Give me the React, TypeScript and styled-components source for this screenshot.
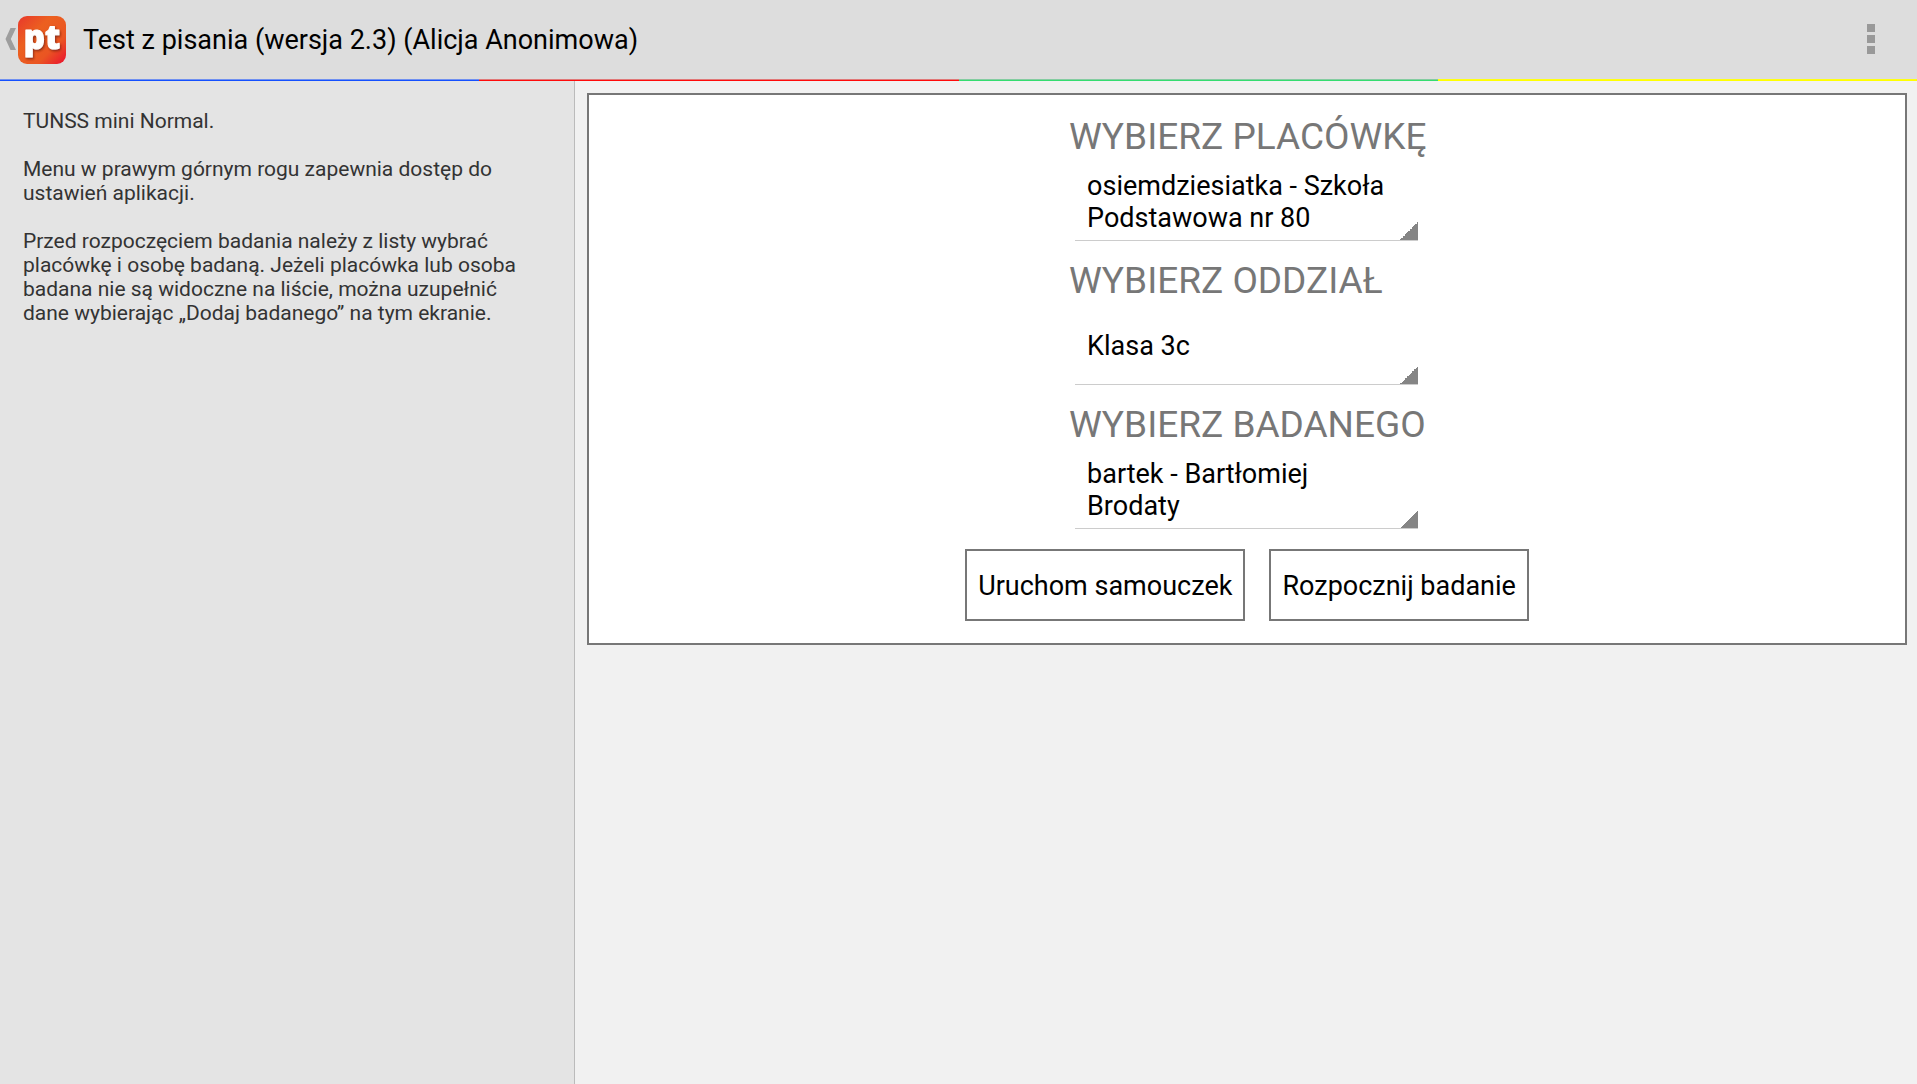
import React, { useState } from "react";
import styled, { createGlobalStyle } from "styled-components";

const GlobalStyle = createGlobalStyle`
  * { box-sizing: border-box; }
  body {
    margin: 0;
    background: #f1f1f1;
    color: #000;
    font-family: Roboto, "Noto Sans", sans-serif;
  }
`;

const Page = styled.div`
  min-height: 100vh;
  display: flex;
  flex-direction: column;
`;

const ActionBar = styled.header`
  display: flex;
  align-items: center;
  justify-content: space-between;
  height: 79px;
  padding: 0 34px 0 4px;
  background: #ddd;
`;

const HomeGroup = styled.div`
  display: flex;
  align-items: center;
  gap: 17px;
`;

const HomeButton = styled.button`
  display: flex;
  padding: 0;
  border: 0;
  background: none;
  cursor: pointer;
`;

const Title = styled.h1`
  margin: 0;
  font-size: 27px;
  line-height: 32px;
  font-weight: 400;
`;

const MenuButton = styled.button`
  display: flex;
  flex-direction: column;
  gap: 3px;
  padding: 8px 8px 9px;
  border: 0;
  background: none;
  cursor: pointer;
`;

const MenuDot = styled.span`
  width: 8px;
  height: 8px;
  background: #999;
`;

const Stripes = styled.div`
  display: flex;
`;

const Stripe = styled.span<{ $edge: string; $color: string }>`
  flex: 1;
  height: 2px;
  background: linear-gradient(${(p) => p.$edge} 50%, ${(p) => p.$color} 50%);
`;

const Body = styled.div`
  flex: 1;
  display: flex;
`;

const Sidebar = styled.aside`
  width: 30%;
  padding: 28px 28px 28px 23px;
  border-right: 1px solid #bbb;
  background: #e4e4e4;
  color: #333;
  font-size: 21px;
  line-height: 24px;
`;

const Paragraph = styled.p`
  margin: 0 0 24px;
`;

const Main = styled.main`
  flex: 1;
  padding: 12px 10px 12px 12px;
`;

const Panel = styled.form`
  display: flex;
  flex-direction: column;
  align-items: center;
  gap: 20px;
  padding: 18px 12px 22px;
  border: 2px solid #777;
  background: #fff;
`;

const Fields = styled.div`
  display: flex;
  flex-direction: column;
  gap: 16px;
  width: 356px;
`;

const Field = styled.div`
  display: flex;
  flex-direction: column;
`;

const FieldLabel = styled.label`
  color: #777;
  font-size: 37px;
  line-height: 48px;
  white-space: nowrap;
`;

const Spinner = styled.select`
  appearance: none;
  height: 80px;
  margin: 0 7px 0 6px;
  padding: 2px 24px 0 12px;
  border: 0;
  border-radius: 0;
  background:
    linear-gradient(135deg, transparent 50%, #858585 50%) right 0 bottom 1px / 18px 18px no-repeat,
    linear-gradient(#ccc, #ccc) left bottom / 100% 1px no-repeat;
  color: #000;
  font-family: inherit;
  font-size: 27px;
  line-height: 32px;
  white-space: normal;
`;

const Actions = styled.div`
  display: flex;
  gap: 24px;
`;

const ActionButton = styled.button`
  height: 72px;
  padding: 2px 11px 0;
  border: 2px solid #777;
  background: #fff;
  color: #000;
  font-family: inherit;
  font-size: 27px;
  line-height: 32px;
  cursor: pointer;
`;

const STRIPES = [
  { edge: "#7090f0", color: "#1450ff" },
  { edge: "#e07878", color: "#ff0a0a" },
  { edge: "#84cca0", color: "#35dc70" },
  { edge: "#ffff14", color: "#ffff00" },
];

const FIELDS = [
  { id: "placowka", label: "WYBIERZ PLACÓWKĘ", value: "osiemdziesiatka - Szkoła Podstawowa nr 80" },
  { id: "oddzial", label: "WYBIERZ ODDZIAŁ", value: "Klasa 3c" },
  { id: "badany", label: "WYBIERZ BADANEGO", value: "bartek - Bartłomiej Brodaty" },
];

function HomeIcon() {
  return (
    <svg width="62" height="64" viewBox="0 -8 62 64" aria-hidden="true">
      <defs>
        <linearGradient id="tile" x1="0" y1="0" x2="1" y2="1">
          <stop offset="0" stopColor="#e8382c" />
          <stop offset="0.35" stopColor="#ec6020" />
          <stop offset="0.7" stopColor="#ea5522" />
          <stop offset="1" stopColor="#ea1030" />
        </linearGradient>
        <filter id="shade" x="-20%" y="-20%" width="150%" height="150%">
          <feDropShadow dx="1" dy="1.5" stdDeviation="1.2" floodColor="#6b1e08" floodOpacity="0.75" />
        </filter>
      </defs>
      <path d="M6.5 12H12L6.8 23L12 34H6.5L1.5 23Z" fill="#9d9d9d" />
      <rect x="14" width="48" height="48" rx="9" fill="url(#tile)" />
      <text
        x="38"
        y="33"
        textAnchor="middle"
        fontFamily='"Open Sans", "Noto Sans", sans-serif'
        fontSize="33"
        fontWeight="800"
        fill="#fff"
        stroke="#fff"
        strokeWidth="1"
        strokeLinejoin="round"
        filter="url(#shade)"
      >
        pt
      </text>
    </svg>
  );
}

function SpinnerField({ id, label, value }: { id: string; label: string; value: string }) {
  const [selected, setSelected] = useState(value);
  return (
    <Field>
      <FieldLabel htmlFor={id}>{label}</FieldLabel>
      <Spinner id={id} value={selected} onChange={(e) => setSelected(e.target.value)}>
        <option>{value}</option>
      </Spinner>
    </Field>
  );
}

export default function App() {
  return (
    <Page>
      <GlobalStyle />
      <ActionBar>
        <HomeGroup>
          <HomeButton type="button" aria-label="Wstecz">
            <HomeIcon />
          </HomeButton>
          <Title>Test z pisania (wersja 2.3) (Alicja Anonimowa)</Title>
        </HomeGroup>
        <MenuButton type="button" aria-label="Menu">
          <MenuDot />
          <MenuDot />
          <MenuDot />
        </MenuButton>
      </ActionBar>
      <Stripes>
        {STRIPES.map((s) => (
          <Stripe key={s.color} $edge={s.edge} $color={s.color} />
        ))}
      </Stripes>
      <Body>
        <Sidebar>
          <Paragraph>TUNSS mini Normal.</Paragraph>
          <Paragraph>Menu w prawym górnym rogu zapewnia dostęp do ustawień aplikacji.</Paragraph>
          <Paragraph>
            Przed rozpoczęciem badania należy z listy wybrać placówkę i osobę badaną. Jeżeli placówka lub
            osoba badana nie są widoczne na liście, można uzupełnić dane wybierając „Dodaj badanego” na tym
            ekranie.
          </Paragraph>
        </Sidebar>
        <Main>
          <Panel onSubmit={(e) => e.preventDefault()}>
            <Fields>
              {FIELDS.map((f) => (
                <SpinnerField key={f.id} {...f} />
              ))}
            </Fields>
            <Actions>
              <ActionButton type="button">Uruchom samouczek</ActionButton>
              <ActionButton type="submit">Rozpocznij badanie</ActionButton>
            </Actions>
          </Panel>
        </Main>
      </Body>
    </Page>
  );
}
